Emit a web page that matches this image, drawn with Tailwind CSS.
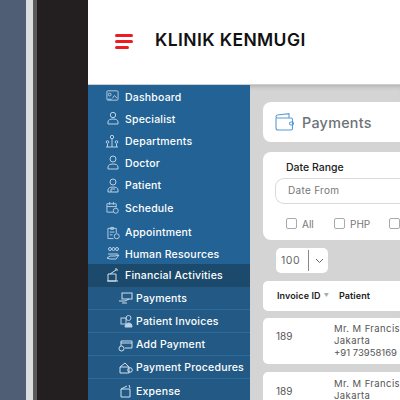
<!doctype html>
<html><head><meta charset="utf-8"><script src="https://cdn.jsdelivr.net/npm/@tailwindcss/browser@4"></script></head>
<body class="m-0">
<div class="flex w-[400px] h-[400px] overflow-hidden font-['Inter',sans-serif] bg-[#231f20]">
  <div class="w-[26px] shrink-0 bg-[#505e75]"></div>
  <div class="w-[7px] shrink-0 bg-[#dcdde0]"></div>
  <div class="w-[4px] shrink-0 bg-[#5a5a5a]"></div>
  <div class="w-[51px] shrink-0 bg-[#231f20]"></div>
  <div class="w-[312px] shrink-0 flex flex-col">
    <header class="h-[85px] shrink-0 bg-white border-b border-[#cfcfcf] flex items-center">
      <div class="ml-[27px] w-[18px] flex flex-col gap-[3px] mt-[-2px]">
        <div class="h-[3px] w-[18px] bg-[#ed1c24] rounded-sm"></div><div class="h-[3px] w-[18px] bg-[#ed1c24] rounded-sm"></div><div class="h-[3px] w-[14px] bg-[#ed1c24] rounded-sm"></div>
      </div>
      <div class="ml-[22px] mt-[-4px] text-[17.5px] font-semibold text-[#111] tracking-[0.4px] whitespace-nowrap">KLINIK KENMUGI</div>
    </header>
    <div class="flex flex-1 min-h-0">
      <aside class="w-[162px] shrink-0 bg-[#236294] text-white text-[10.5px] font-medium tracking-[0.2px] whitespace-nowrap">
        <div class="h-[22px] flex items-center pl-[37px] pt-px relative mt-px"><svg class="absolute left-[18px] top-[3px] w-[13px] h-[13px]" viewBox="0 0 14 14" fill="none" stroke="#b9d2e6"><rect x="1" y="2" width="12" height="10" rx="1"/><circle cx="4" cy="6" r="1.5"/><path d="M7 10l2-3 3 3M2 11h4"/></svg>Dashboard</div>
        <div class="h-[22px] flex items-center pl-[37px] pt-px relative"><svg class="absolute left-[19px] top-[3px] w-[12px] h-[14px]" viewBox="0 0 12 14" fill="none" stroke="#b9d2e6"><circle cx="6" cy="4" r="2.7"/><path d="M1 13v-2c0-2 2-3 5-3s5 1 5 3v2z"/></svg>Specialist</div>
        <div class="h-[22px] flex items-center pl-[37px] pt-px relative"><svg class="absolute left-[17px] top-[4px] w-[14px] h-[14px]" viewBox="0 0 14 14" fill="none" stroke="#b9d2e6"><circle cx="7" cy="3" r="1.7"/><circle cx="2.5" cy="8" r="1.3"/><circle cx="11.5" cy="8" r="1.3"/><path d="M1 13h12M7 5v8M2.5 10v3M11.5 10v3"/></svg>Departments</div>
        <div class="h-[23px] flex items-center pl-[37px] pt-px relative"><svg class="absolute left-[19px] top-[3px] w-[12px] h-[15px]" viewBox="0 0 12 15" fill="none" stroke="#b9d2e6"><circle cx="6" cy="4" r="3"/><path d="M1 14v-2c0-2 2-3 5-3s5 1 5 3v2z"/></svg>Doctor</div>
        <div class="h-[21px] flex items-center pl-[37px] relative"><svg class="absolute left-[19px] top-[3px] w-[12px] h-[15px]" viewBox="0 0 12 15" fill="none" stroke="#b9d2e6"><circle cx="6" cy="4" r="3"/><path d="M1 14v-2c0-2 2-3 5-3s5 1 5 3v2zM4 14v-3h4"/></svg>Patient</div>
        <div class="h-[24px] flex items-center pl-[37px] pt-px relative"><svg class="absolute left-[18px] top-[5px] w-[13px] h-[13px]" viewBox="0 0 14 14" fill="none" stroke="#b9d2e6"><path d="M8 12H1V3h10v4M1 6h10M4 1v3M8 1v3"/><circle cx="10.5" cy="10.5" r="2.7"/></svg>Schedule</div>
        <div class="h-[24px] flex items-center pl-[37px] pt-px relative"><svg class="absolute left-[19px] top-[6px] w-[13px] h-[14px]" viewBox="0 0 14 14" fill="none" stroke="#b9d2e6"><path d="M7 13H1V2h9v5M4 1h3v2H4zM3 6h5M3 9h3"/><circle cx="10.5" cy="10.5" r="2.7"/></svg>Appointment</div>
        <div class="h-[20px] flex items-center pl-[37px] pt-px relative"><svg class="absolute left-[18px] top-[2px] w-[14px] h-[15px]" viewBox="0 0 14 15" fill="none" stroke="#b9d2e6"><circle cx="4" cy="3" r="1.5"/><circle cx="7.5" cy="3" r="1.5"/><circle cx="11" cy="3" r="1.5"/><path d="M2 8h10M1 12l3-2h5l4-1-3 4H4z"/></svg>Human Resources</div>
        <div class="h-[23px] flex items-center pl-[37px] relative bg-[#1b4a6d]"><svg class="absolute left-[19px] top-[4px] w-[12px] h-[14px]" viewBox="0 0 12 14" fill="none" stroke="#cfe0ee"><path d="M1 13V6h8v7zM0 13h11M3 6l6-4M8 1h2v2"/></svg>Financial Activities</div>
        <div class="bg-[#225a85]">
          <div class="h-[23px] flex items-center pl-[48px] pt-[2px] relative border-b border-[#2c6a99]"><svg class="absolute left-[30px] top-[5px] w-[15px] h-[12px]" viewBox="0 0 15 12" fill="none" stroke="#cfe0ee"><rect x="4" y="1" width="10" height="6"/><path d="M1 9h6l4-2M4 11h5"/></svg>Payments</div>
          <div class="h-[23px] flex items-center pl-[48px] pt-px relative border-b border-[#2c6a99]"><svg class="absolute left-[32px] top-[4px] w-[13px] h-[14px]" viewBox="0 0 13 14" fill="#b9d2e6" stroke="#b9d2e6"><rect x="1" y="4" width="5" height="6" fill="none"/><circle cx="8.5" cy="4" r="2.5" fill="none"/><path d="M5 13c0-3 2-4 4-4s3 1 3 4z"/></svg>Patient Invoices</div>
          <div class="h-[23px] flex items-center pl-[48px] pt-px relative border-b border-[#2c6a99]"><svg class="absolute left-[30px] top-[6px] w-[15px] h-[13px]" viewBox="0 0 15 13" fill="none" stroke="#cfe0ee"><path d="M3 7V2h11v7H7M3 4h11"/><circle cx="3.5" cy="9.500" r="2.500"/></svg>Add Payment</div>
          <div class="h-[23px] flex items-center pl-[48px] pt-px relative border-b border-[#2c6a99]"><svg class="absolute left-[31px] top-[5px] w-[14px] h-[13px]" viewBox="0 0 14 13" fill="none" stroke="#cfe0ee"><path d="M1 6l5-4 4 4M1 6h9v6H1z"/><circle cx="11" cy="9" r="2.300"/></svg>Payment Procedures</div>
          <div class="h-[25px] flex items-center pl-[48px] relative"><svg class="absolute left-[32px] top-[5px] w-[12px] h-[14px]" viewBox="0 0 12 14" fill="none" stroke="#cfe0ee"><path d="M1 5h9v8H1zM1 5l6-3M9 1l1 3"/></svg>Expense</div>
        </div>
      </aside>
      <main class="flex-1 min-w-0 bg-[#d4d4d4] pl-[13px] pt-[17px] shadow-[inset_0_5px_5px_-4px_rgba(0,0,0,0.2)]">
        <div class="h-[40px] bg-white rounded-l-[8px] flex items-center pl-[12px] w-[137px]">
          <svg class="w-[19px] h-[18px] shrink-0" viewBox="0 0 19 18" fill="none" stroke="#5b9bd5" stroke-width="1.1"><path d="M1 5V15a2 2 0 0 0 2 2h13a1.500 1.500 0 0 0 1.500-1.500V6.500A1.500 1.500 0 0 0 16 5H2.500A1.500 1.500 0 0 1 1 3.500 1.500 1.500 0 0 1 2.300 2L14 .7V5"/><rect x="14.500" y="9" width="4" height="3" rx="1.500"/></svg>
          <span class="ml-[8px] pt-px text-[14.3px] font-medium text-[#6d7278] tracking-[0.3px]">Payments</span>
        </div>
        <div class="mt-[10px] h-[88px] bg-white rounded-l-[8px] w-[137px] pl-[12px] overflow-hidden">
          <div class="pt-[8px] pl-[11px] h-[26px] text-[10.500px] font-medium text-[#222]">Date Range</div>
          <div class="h-[26px] border border-[#d9d9d9] rounded-l-[9px] border-r-0 flex items-center pl-[12px] pb-px text-[10px] text-[#777] tracking-[0.3px]">Date From</div>
          <div class="flex items-center mt-[14px] pl-[11px] text-[10px] text-[#777] leading-none">
            <span class="w-[11px] h-[11px] border border-[#aaa] rounded-[2px] shrink-0"></span><span class="ml-[5px] w-[32px]">All</span>
            <span class="w-[11px] h-[11px] border border-[#aaa] rounded-[2px] shrink-0"></span><span class="ml-[5px] w-[39px]">PHP</span>
            <span class="w-[11px] h-[11px] border border-[#aaa] rounded-[2px] shrink-0"></span>
          </div>
        </div>
        <div class="mt-[8px] w-[52px] h-[25px] ml-[13px] bg-white rounded-[5px] flex items-center text-[10.5px] text-[#666] tracking-[0.5px]">
          <span class="pl-[5px] w-[32px]">100</span><span class="w-px h-[21px] bg-[#888]"></span>
          <svg class="ml-[6px] w-[9px] h-[6px]" viewBox="0 0 9 6" fill="none" stroke="#666"><path d="M1 1l3.500 3.500L8 1"/></svg>
        </div>
        <div class="mt-[8px] h-[30px] w-[137px] bg-white rounded-l-[5px] flex items-center pl-[14px] text-[9px] font-semibold text-[#222] whitespace-nowrap tracking-[0.1px]">
          <span>Invoice ID</span><span class="ml-[3px] text-[5px] text-[#aaa]">▼</span><span class="ml-[10px]">Patient</span>
        </div>
        <div class="mt-[7px] h-[46px] w-[137px] bg-white rounded-l-[5px] flex items-center text-[10px] text-[#555] overflow-hidden whitespace-nowrap">
          <span class="pl-[13px] w-[71px] shrink-0 mt-[-10px]">189</span><span class="text-[9.5px] leading-[12px] tracking-[0.4px]">Mr. M Francis<br>Jakarta<br><span class="tracking-normal">+91 73958169</span></span>
        </div>
        <div class="mt-[8px] h-[48px] w-[137px] bg-white rounded-l-[5px] flex items-center text-[10px] text-[#555] overflow-hidden whitespace-nowrap">
          <span class="pl-[13px] w-[71px] shrink-0 mt-[-10px]">189</span><span class="text-[9.5px] leading-[12px] tracking-[0.4px]">Mr. M Francis<br>Jakarta<br><span class="tracking-normal">+91 73958169</span></span>
        </div>
      </main>
    </div>
  </div>
</div>
</body></html>
